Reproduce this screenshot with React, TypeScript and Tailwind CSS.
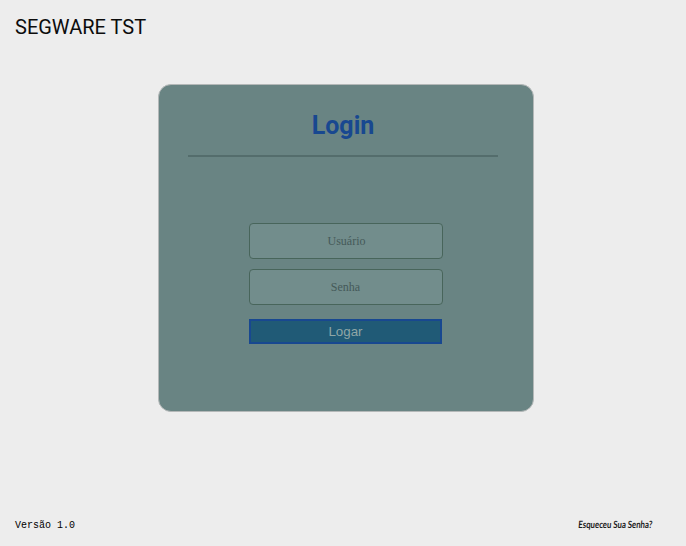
export default function App() {
  return (
    <div className="flex h-[546px] w-[686px] flex-col overflow-hidden bg-[#ededed] font-['Roboto',sans-serif] text-black">
      <header className="h-[84px] pl-[15px] pt-[13px] text-[20px] leading-[28px] text-[#0c0c0c]">SEGWARE TST</header>
      <main className="ml-[158px] flex h-[328px] w-[376px] flex-col rounded-[13px] border border-[#b4b8b8] bg-[#698483] px-[29px] pt-[23px]">
        <h1 className="h-[47px] w-[310px] pt-px text-center text-[25px] font-bold leading-[34px] text-[#184890]">Login</h1>
        <hr className="w-[310px] border-t-2 border-[#546d6c]" />
        <form className="ml-[61px] mt-[66px] flex w-[194px] flex-col">
          <input placeholder="Usuário" className="h-[36px] rounded-[4px] border border-[#48655b] bg-[#728d8c] pl-px text-center font-['Liberation_Serif',serif] text-[12px] placeholder:text-[#455a59]" />
          <input type="password" placeholder="Senha" className="mt-[10px] h-[36px] rounded-[4px] border border-[#48655b] bg-[#728d8c] pr-px text-center font-['Liberation_Serif',serif] text-[12px] placeholder:text-[#455a59]" />
          <button type="button" className="mt-[14px] h-[25px] w-[193px] border-2 border-[#184890] bg-[#205a76] font-['Liberation_Sans',sans-serif] text-[13.33px] leading-[20px] text-[#8fa6a6]">Logar</button>
        </form>
      </main>
      <footer className="mt-auto flex h-[32px] justify-between pl-[15px] pr-[34px]">
        <span className="pt-px font-['Liberation_Mono',monospace] text-[10px] leading-[22px]">Versão 1.0</span>
        <span className="origin-right -skew-x-6 scale-x-[0.78] font-['Lato',cursive] text-[10px] font-bold leading-[20px] text-[#1a1a1a]">Esqueceu Sua Senha?</span>
      </footer>
    </div>
  );
}
